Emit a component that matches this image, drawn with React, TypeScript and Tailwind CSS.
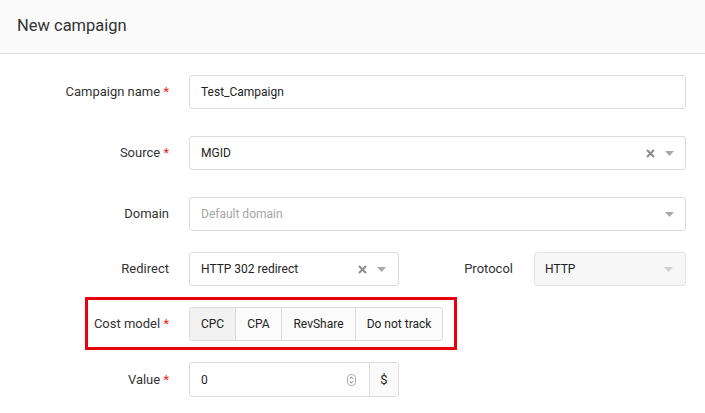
import React from "react";

const Caret = ({ light }: { light?: boolean }) => (
  <svg width="9" height="5" viewBox="0 0 9 5" className="shrink-0">
    <path d="M0 0 L9 0 L4.5 5 Z" fill={light ? "#cfcfcf" : "#a8a8a8"} />
  </svg>
);

const Clear = () => (
  <svg width="9" height="9" viewBox="0 0 9 9" className="shrink-0">
    <path d="M1 1 L8 8 M8 1 L1 8" stroke="#8c8c8c" strokeWidth="2" />
  </svg>
);

const Label = ({ text, req }: { text: string; req?: boolean }) => (
  <div className="w-[189px] shrink-0 pr-[20px] text-right text-[13px] text-[#333]">
    {text}
    {req && <span className="text-[#ff1a1a]"> *</span>}
  </div>
);

export default function App() {
  return (
    <div
      className="w-[705px] h-[413px] bg-white overflow-hidden text-[#333]"
      style={{ fontFamily: "Roboto, 'Liberation Sans', sans-serif" }}
    >
      <div className="h-[54px] bg-[#fafafa] border-b border-[#dedede] flex items-center pl-[17px]">
        <span className="text-[16.5px] text-[#333] leading-none">New campaign</span>
      </div>

      <div className="pr-[19px]">
        {/* Campaign name */}
        <div className="flex items-center mt-[21px] h-[34px]">
          <Label text="Campaign name" req />
          <div className="flex-1 h-[34px] border border-[#dcdcdc] rounded-[3px] flex items-center px-[11px] text-[12px] text-[#222]">
            Test_Campaign
          </div>
        </div>

        {/* Source */}
        <div className="flex items-center mt-[27px] h-[34px]">
          <Label text="Source" req />
          <div className="flex-1 h-[34px] border border-[#dcdcdc] rounded-[3px] flex items-center pl-[11px] pr-[11px] text-[12px] text-[#222]">
            <span className="flex-1">MGID</span>
            <Clear />
            <span className="w-[10px]" />
            <Caret />
          </div>
        </div>

        {/* Domain */}
        <div className="flex items-center mt-[27px] h-[34px]">
          <Label text="Domain" />
          <div className="flex-1 h-[34px] border border-[#dcdcdc] rounded-[3px] flex items-center pl-[11px] pr-[11px] text-[12px] text-[#a6a6a6]">
            <span className="flex-1">Default domain</span>
            <Caret />
          </div>
        </div>

        {/* Redirect / Protocol */}
        <div className="flex items-center mt-[21px] h-[34px]">
          <Label text="Redirect" />
          <div className="w-[210px] shrink-0 h-[34px] border border-[#dcdcdc] rounded-[3px] flex items-center pl-[11px] pr-[12px] text-[12px] text-[#222]">
            <span className="flex-1">HTTP 302 redirect</span>
            <Clear />
            <span className="w-[10px]" />
            <Caret />
          </div>
          <div className="flex-1 text-right pr-[21px] text-[13px] text-[#333]">Protocol</div>
          <div className="w-[152px] shrink-0 h-[34px] border border-[#e3e3e3] bg-[#f6f6f6] rounded-[3px] flex items-center pl-[10px] pr-[12px] text-[12px] text-[#222]">
            <span className="flex-1">HTTP</span>
            <Caret light />
          </div>
        </div>

        {/* Cost model */}
        <div className="relative flex items-center mt-[21px] h-[34px]">
          <Label text="Cost model" req />
          <div className="flex h-[34px] border border-[#dcdcdc] rounded-[3px] bg-[#fbfbfb] text-[12px] text-[#222] overflow-hidden">
            <div className="w-[46px] flex items-center justify-center bg-[#f1f1f1] border-r border-[#dcdcdc]">CPC</div>
            <div className="w-[46px] flex items-center justify-center border-r border-[#dcdcdc]">CPA</div>
            <div className="w-[74px] flex items-center justify-center border-r border-[#dcdcdc]">RevShare</div>
            <div className="w-[86px] flex items-center justify-center">Do not track</div>
          </div>
          <div className="absolute left-[85px] top-[-10px] w-[372px] h-[53px] border-[3px] border-[#e8000b] pointer-events-none" />
        </div>

        {/* Value */}
        <div className="flex items-center mt-[21px] h-[35px]">
          <Label text="Value" req />
          <div className="flex h-[35px] w-[210px] border border-[#dcdcdc] rounded-[3px] text-[12px] text-[#222]">
            <div className="flex-1 flex items-center pl-[11px] pr-[13px]">
              <span className="flex-1">0</span>
              <svg width="9" height="12" viewBox="0 0 9 12">
                <rect x="0.5" y="0.5" width="8" height="11" rx="3.5" fill="#fff" stroke="#b0b0b0" />
                <path d="M2.9 4.7 L4.5 3.1 L6.1 4.7" fill="none" stroke="#555" strokeWidth="0.9" />
                <path d="M2.9 7.3 L4.5 8.9 L6.1 7.3" fill="none" stroke="#555" strokeWidth="0.9" />
              </svg>
            </div>
            <div className="w-[29px] border-l border-[#dcdcdc] bg-[#fafafa] flex items-center justify-center text-[13px] text-[#222]">$</div>
          </div>
        </div>
      </div>
    </div>
  );
}
